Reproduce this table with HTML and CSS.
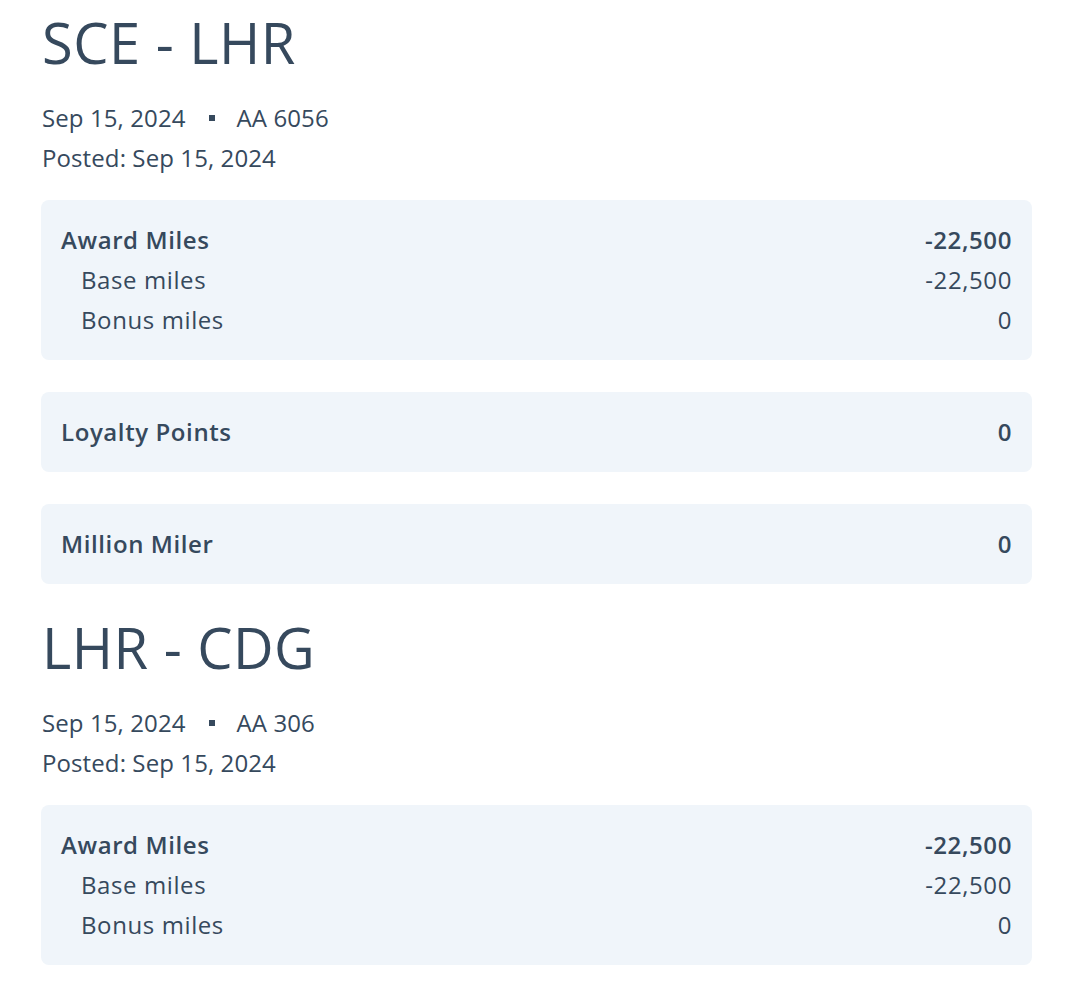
FILE: index.html
```html
<!DOCTYPE html>
<html lang="en">
<head>
<meta charset="utf-8">
<title>Activity</title>
<link rel="stylesheet" href="styles.css">
</head>
<body>
<main class="page">
  <section class="segment">
    <h2 class="route">SCE - LHR</h2>
    <div class="meta">
      <div class="meta-line"><span>Sep 15, 2024</span><span class="dot"></span><span>AA 6056</span></div>
      <div class="meta-line">Posted: Sep 15, 2024</div>
    </div>
    <div class="cards">
      <div class="card">
        <div class="row head"><span>Award Miles</span><span>-22,500</span></div>
        <div class="row sub"><span>Base miles</span><span>-22,500</span></div>
        <div class="row sub"><span>Bonus miles</span><span>0</span></div>
      </div>
      <div class="card">
        <div class="row head"><span>Loyalty Points</span><span>0</span></div>
      </div>
      <div class="card">
        <div class="row head"><span>Million Miler</span><span>0</span></div>
      </div>
    </div>
  </section>
  <section class="segment">
    <h2 class="route">LHR - CDG</h2>
    <div class="meta">
      <div class="meta-line"><span>Sep 15, 2024</span><span class="dot"></span><span>AA 306</span></div>
      <div class="meta-line">Posted: Sep 15, 2024</div>
    </div>
    <div class="cards">
      <div class="card">
        <div class="row head"><span>Award Miles</span><span>-22,500</span></div>
        <div class="row sub"><span>Base miles</span><span>-22,500</span></div>
        <div class="row sub"><span>Bonus miles</span><span>0</span></div>
      </div>
    </div>
  </section>
</main>
</body>
</html>
```
FILE: styles.css
```css
html, body {
  margin: 0;
  padding: 0;
  background: #ffffff;
}
body {
  font-family: "Open Sans", "Noto Sans", sans-serif;
  color: #36495d;
}
.page {
  width: 991px;
  padding-left: 41px;
  display: flex;
  flex-direction: column;
  gap: 21px;
}
.segment {
  display: flex;
  flex-direction: column;
}
.route {
  margin: 0;
  font-size: 56px;
  font-weight: 400;
  line-height: 84px;
  letter-spacing: 0.5px;
  padding-left: 1px;
}
.meta {
  padding: 14px 0 22px 1px;
  font-size: 24px;
  line-height: 40px;
  letter-spacing: 0.1px;
}
.meta-line {
  display: flex;
  align-items: center;
}
.dot {
  width: 6px;
  height: 6px;
  background: #36495d;
  margin: 0 22px 0 23px;
}
.cards {
  display: flex;
  flex-direction: column;
  gap: 32px;
}
.card {
  background: #f0f5fa;
  border-radius: 8px;
  padding: 20px 20px;
}
.row {
  display: flex;
  justify-content: space-between;
  font-size: 24px;
  line-height: 40px;
  letter-spacing: 0.6px;
}
.row.head {
  font-weight: 600;
}
.row.sub span:first-child {
  padding-left: 20px;
}
```
